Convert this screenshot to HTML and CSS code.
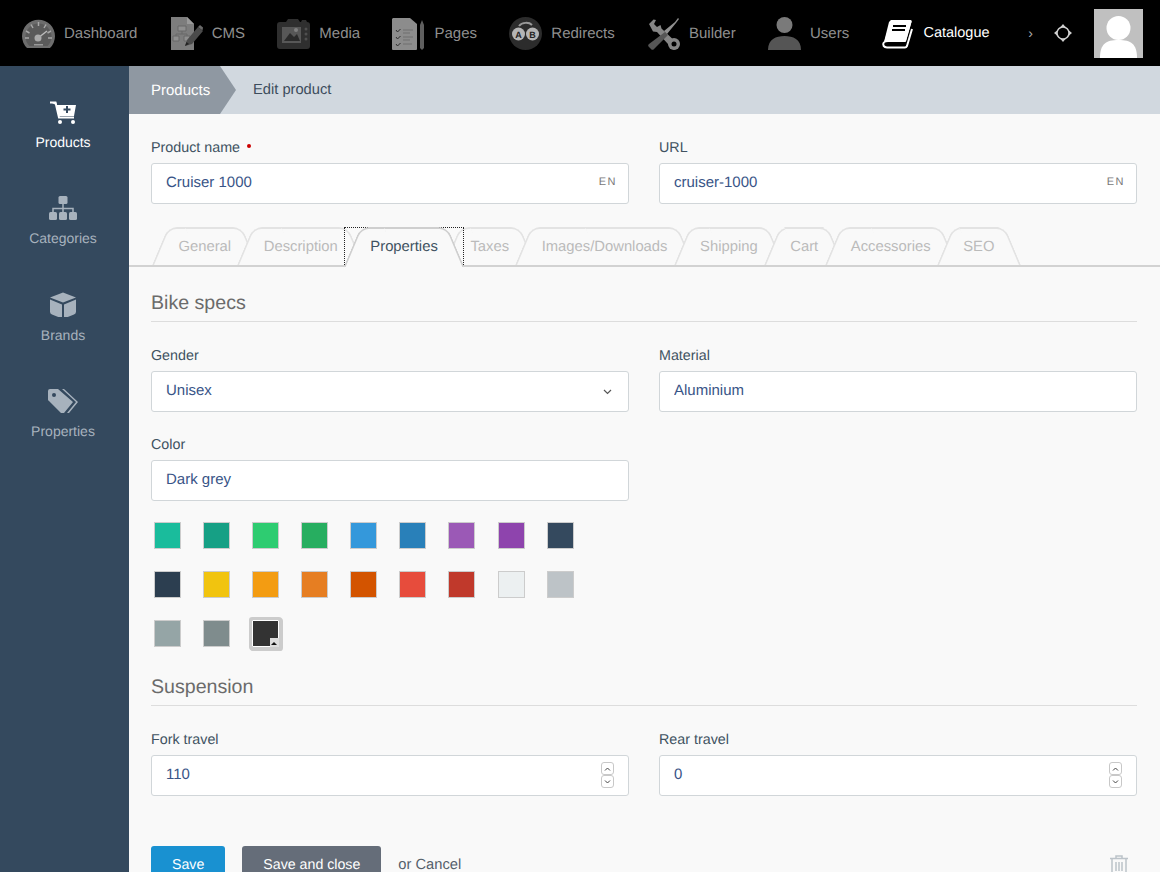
FILE: index.html
```html
<!DOCTYPE html>
<html lang="en">
<head>
<meta charset="utf-8">
<title>Edit product</title>
<link rel="stylesheet" href="styles.css">
</head>
<body>
<header class="topbar">
  <nav class="topnav">
    <a class="nav-item"><svg class="nav-icon" width="33" height="33" viewBox="0 0 33 33"><path d="M5 31A16.5 16.5 0 1 1 28 31Z" fill="#6d6d6d"/><path d="M7.5 29A13 13 0 1 1 25.500 29Z" fill="#5a5a5a"/><path d="M16.500 5v4M9 7.500l2 3.500M24 7.500l-2 3.500M4 14l3.500 2M29 14l-3.500 2M3 21h4M30 21h-4" stroke="#a8a8a8" stroke-width="1.500"/><path d="M16 21L25 14" stroke="#bbb" stroke-width="1.500"/><circle cx="16" cy="21" r="3.500" fill="#aaa"/><path d="M12 27h9v1.500h-9z" fill="#999"/></svg><span>Dashboard</span></a>
    <a class="nav-item"><svg class="nav-icon" width="33" height="33" viewBox="0 0 33 33"><path d="M1 0h16l7 7v26H1z" fill="#7d7d7d"/><path d="M17 0l7 7h-7z" fill="#9a9a9a"/><path d="M8 9h8v5H8zM3 19h6v5H3zM14 19h6v5h-6z" fill="#8f8f8f" stroke="#696969"/><path d="M12 14v3M6 19v-2h11v2" stroke="#696969" fill="none"/><path d="M15 29l2-6 11-13 5 4-11 13z" fill="#4b4b4b"/><path d="M28 10l2-2 3 2.500-.5 3z" fill="#6a6a6a"/><path d="M15 29l1.500-4 2.500 2z" fill="#222"/></svg><span>CMS</span></a>
    <a class="nav-item"><svg class="nav-icon" width="33" height="33" viewBox="0 0 33 33"><path d="M3 5h6l2-3h10l2 3h1l1-2h4l1 2a3 3 0 0 1 3 3v21a3 3 0 0 1-3 3H3a3 3 0 0 1-3-3V8a3 3 0 0 1 3-3z" fill="#2f2f2f"/><path d="M5 10h19v16H5z" fill="#575757"/><path d="M7 24l6-8 4 4 3-3 3 7z" fill="#2a2a2a"/><circle cx="19" cy="13" r="2" fill="#808080"/><circle cx="29" cy="12" r="1.500" fill="#4f4f4f"/><circle cx="29" cy="17" r="1.500" fill="#4f4f4f"/><circle cx="29" cy="22" r="1.500" fill="#4f4f4f"/></svg><span>Media</span></a>
    <a class="nav-item"><svg class="nav-icon" width="33" height="33" viewBox="0 0 33 33"><path d="M1 1h17l7 6v25a1 1 0 0 1-1 1H1a1 1 0 0 1-1-1V2z" fill="#8c8c8c"/><path d="M4 13l1.500 2 3-3M4 20l1.500 2 3-3M4 27l1.500 2 3-3" stroke="#2e2e2e" stroke-width="1" fill="none"/><path d="M11 13h10M11 16h7M11 20h10M11 23h7M11 27h9" stroke="#6f6f6f"/><path d="M28 8l2-5 2 5v23l-2 2-2-2z" fill="#5f5f5f"/></svg><span>Pages</span></a>
    <a class="nav-item"><svg class="nav-icon" width="33" height="33" viewBox="0 0 33 33"><circle cx="16.500" cy="16.500" r="16.500" fill="#2c2c2c"/><circle cx="9.500" cy="17" r="6.500" fill="#b5b5b5"/><circle cx="23.500" cy="17" r="6.500" fill="#b5b5b5"/><path d="M10 9C13 5 20 5 23 8" stroke="#999" stroke-width="2" fill="none"/><text class="ab" x="9.500" y="20.500">A</text><text class="ab" x="23.500" y="20.500">B</text></svg><span>Redirects</span></a>
    <a class="nav-item"><svg class="nav-icon" width="33" height="33" viewBox="0 0 33 33"><path d="M2 7L6.500 2.500 9 3 7 7l3 3 3.500-2 1 3.500L32 28a5 5 0 0 1-6 4.500L10 15 6 14.500z" fill="#858585"/><circle cx="27" cy="27" r="6" fill="#858585"/><circle cx="27" cy="27" r="2.500" fill="#000"/><path d="M17 14L28 5l3-4 1 1-3 4-9 11z" fill="#909090"/><path d="M18 15l3 3-14 14a2 2 0 0 1-3 0l-2-2a2 2 0 0 1 0-3z" fill="#565656"/></svg><span>Builder</span></a>
    <a class="nav-item"><svg class="nav-icon" width="33" height="33" viewBox="0 0 33 33"><circle cx="16.500" cy="8" r="8" fill="#7a7a7a"/><path d="M0 33c0-11 8-14 16.500-14S33 22 33 33z" fill="#555"/></svg><span>Users</span></a>
    <a class="nav-item active"><svg class="nav-icon" width="33" height="33" viewBox="0 0 33 33"><path d="M10 3h19a1.500 1.500 0 0 1 1.500 2L25 24a1.500 1.500 0 0 1-1.500 1H7c-3 0-4.500 1-4.500 2" fill="#fff"/><path d="M10 3h19a1.500 1.500 0 0 1 1.500 2L25 24a1.500 1.500 0 0 1-1.500 1H3L8 5z" fill="#fff"/><path d="M3 25c-2 3 0 5.500 3 5.500h18c1 0 1.500-.5 2-1.500l5-17" fill="none" stroke="#fff" stroke-width="2"/><path d="M12 9h13M11 13h13" stroke="#000" stroke-width="2"/></svg><span>Catalogue</span></a>
  </nav>
  <span class="nav-more">›</span>
  <svg class="nav-move" width="18" height="18" viewBox="0 0 18 18"><circle cx="9" cy="9" r="6" fill="none" stroke="#d0d0d0" stroke-width="1.500"/><path d="M9 0l2.500 3h-5zM9 18l2.500-3h-5zM0 9l3-2.500v5zM18 9l-3-2.500v5z" fill="#d0d0d0"/></svg>
  <div class="avatar"><svg width="49" height="49" viewBox="0 0 49 49"><circle cx="24.500" cy="19" r="12" fill="#fff"/><path d="M6 49c0-14 6-18 18.500-18S43 35 43 49z" fill="#fff"/></svg></div>
</header>

<div class="shell">
  <aside class="sidebar">
    <a class="side-item active"><svg width="30" height="26" viewBox="0 0 30 26"><path d="M2 4h6l1 3h19l-2 11H11L8 7" fill="#fff"/><path d="M2 4.500h5.500L11 19.500h15" fill="none" stroke="#fff" stroke-width="2"/><path d="M19 8v7M15.500 11.500h7" stroke="#34495e" stroke-width="2"/><circle cx="12" cy="24" r="2" fill="#fff"/><circle cx="25" cy="24" r="2" fill="#fff"/></svg><span>Products</span></a>
    <a class="side-item"><svg width="30" height="26" viewBox="0 -1 30 26"><rect x="10.500" y="1" width="9" height="8" rx="1.500"/><rect x="1" y="17" width="8" height="8" rx="1.500"/><rect x="11" y="17" width="8" height="8" rx="1.500"/><rect x="21" y="17" width="8" height="8" rx="1.500"/><path d="M15 9v8M5 17v-3.500h20V17" fill="none" stroke="#a7b2bd" stroke-width="1.500"/></svg><span>Categories</span></a>
    <a class="side-item"><svg width="30" height="26" viewBox="0 -1.500 30 26"><path d="M15 0l13 5-13 5L2 5z"/><path d="M2 7l12 5v14L4 22a3 3 0 0 1-2-3zM28 7L16 12v14l10-4a3 3 0 0 0 2-3z"/></svg><span>Brands</span></a>
    <a class="side-item"><svg width="30" height="26" viewBox="0 -2 30 26"><path d="M0 2a2 2 0 0 1 2-2h8l15 13-9 11a2 2 0 0 1-3 0L1 12a2 2 0 0 1-1-2z"/><circle cx="6" cy="6" r="2" fill="#34495e"/><path d="M14 0h2l14 13-9 11h-2l9-11z"/></svg><span>Properties</span></a>
  </aside>

  <main class="main">
    <div class="crumbs">
      <a class="crumb-first">Products</a>
      <span class="crumb-current">Edit product</span>
    </div>

    <div class="pad two-col top-fields">
      <div class="field">
        <label class="label required">Product name</label>
        <div class="control"><input class="input" value="Cruiser 1000"><span class="lang">EN</span></div>
      </div>
      <div class="field">
        <label class="label">URL</label>
        <div class="control"><input class="input" value="cruiser-1000"><span class="lang">EN</span></div>
      </div>
    </div>

    <div class="tabs">
      <a class="tab">General</a>
      <a class="tab">Description</a>
      <a class="tab tab-active"><i class="focus-ring"></i><b class="tab-text">Properties</b></a>
      <a class="tab">Taxes</a>
      <a class="tab">Images/Downloads</a>
      <a class="tab">Shipping</a>
      <a class="tab">Cart</a>
      <a class="tab">Accessories</a>
      <a class="tab">SEO</a>
    </div>

    <div class="pad pane">
      <h3 class="section">Bike specs</h3>
      <div class="two-col section-fields">
        <div class="field">
          <label class="label">Gender</label>
          <div class="control"><div class="input select">Unisex</div><svg class="chev" width="9" height="6" viewBox="0 0 9 6"><path d="M1 1l3.500 3.500L8 1" fill="none" stroke="#555" stroke-width="1.200"/></svg></div>
        </div>
        <div class="field">
          <label class="label">Material</label>
          <div class="control"><input class="input" value="Aluminium"></div>
        </div>
      </div>
      <div class="two-col color-row">
        <div class="field">
          <label class="label">Color</label>
          <div class="control"><input class="input" value="Dark grey"></div>
          <div class="swatches">
            <i class="swatch c1"></i><i class="swatch c2"></i><i class="swatch c3"></i><i class="swatch c4"></i><i class="swatch c5"></i><i class="swatch c6"></i><i class="swatch c7"></i><i class="swatch c8"></i><i class="swatch c9"></i>
            <i class="swatch c10"></i><i class="swatch c11"></i><i class="swatch c12"></i><i class="swatch c13"></i><i class="swatch c14"></i><i class="swatch c15"></i><i class="swatch c16"></i><i class="swatch c17"></i><i class="swatch c18"></i>
            <i class="swatch c19"></i><i class="swatch c20"></i><i class="swatch c21 selected"></i>
          </div>
        </div>
      </div>
      <h3 class="section section-second">Suspension</h3>
      <div class="two-col section-fields">
        <div class="field">
          <label class="label">Fork travel</label>
          <div class="control"><input class="input" value="110"><span class="spin"><i class="spin-btn"><svg width="7" height="4" viewBox="0 0 7 4"><path d="M1 3.500l2.500-2.500L6 3.500" fill="none" stroke="#444"/></svg></i><i class="spin-btn"><svg width="7" height="4" viewBox="0 0 7 4"><path d="M1 .5l2.500 2.500L6 .5" fill="none" stroke="#444"/></svg></i></span></div>
        </div>
        <div class="field">
          <label class="label">Rear travel</label>
          <div class="control"><input class="input" value="0"><span class="spin"><i class="spin-btn"><svg width="7" height="4" viewBox="0 0 7 4"><path d="M1 3.500l2.500-2.500L6 3.500" fill="none" stroke="#444"/></svg></i><i class="spin-btn"><svg width="7" height="4" viewBox="0 0 7 4"><path d="M1 .5l2.500 2.500L6 .5" fill="none" stroke="#444"/></svg></i></span></div>
        </div>
      </div>
      <div class="actions">
        <a class="btn btn-primary">Save</a>
        <a class="btn btn-dark">Save and close</a>
        <span class="cancel">or Cancel</span>
        <svg class="trash" width="18" height="20" viewBox="0 0 18 20"><path d="M0 3.500h18M6 3V1h6v2" fill="none" stroke="#bcc3c9" stroke-width="1.500"/><path d="M2 4v15h14V4" fill="none" stroke="#bcc3c9" stroke-width="1.500"/><path d="M6 7v9M9 7v9M12 7v9" stroke="#bcc3c9" stroke-width="1.500"/></svg>
      </div>
    </div>
  </main>
</div>
</body>
</html>
```

FILE: styles.css
```css
* { box-sizing: border-box; }
html, body { margin: 0; height: 872px; overflow: hidden; }
body { font-family: "Liberation Sans", Arial, sans-serif; font-size: 14px; color: #405261; background: #f9f9f9; text-rendering: geometricPrecision; }

.topbar { display: flex; align-items: center; height: 66px; background: #000; padding-left: 22px; }
.topnav { display: flex; gap: 32.300px; flex: 1; }
.nav-item { display: flex; align-items: center; gap: 9px; color: #8f8f8f; font-size: 15px; }
.nav-item.active { color: #fff; font-size: 14.500px; }
.nav-icon { display: block; }
.ab { font: bold 9px "Liberation Sans", sans-serif; text-anchor: middle; fill: #222; }
.nav-more { color: #aaa; font-size: 14px; margin-right: 21px; }
.nav-move { margin-right: 22px; }
.avatar { width: 49px; height: 49px; background: #c0c0c0; margin-right: 17px; overflow: hidden; }
.avatar svg { display: block; }

.shell { display: flex; height: 806px; }
.sidebar { width: 129px; flex: none; background: #34495e; padding: 32px 3px 0 0; display: flex; flex-direction: column; }
.side-item { height: 96.300px; flex: none; display: flex; flex-direction: column; align-items: center; gap: 10px; color: #a7b2bd; fill: #a7b2bd; }
.side-item.active { color: #fff; }
.side-item svg { display: block; }

.main { flex: 1; min-width: 0; }
.crumbs { display: flex; align-items: center; height: 48px; background: #d1d8df; }
.crumb-first { align-self: stretch; display: flex; align-items: center; width: 107px; padding-left: 22px; background: #8f98a2; color: #fff; font-size: 15px; clip-path: polygon(0 0, 91px 0, 107px 50%, 91px 100%, 0 100%); }
.crumb-current { margin-left: 17px; color: #3c4c5c; font-size: 14.700px; }

.pad { padding: 0 23px 0 22px; }
.two-col { display: grid; grid-template-columns: 478px 478px; column-gap: 30px; }
.top-fields { padding-top: 25px; }
.label { display: block; height: 17px; line-height: 18px; margin-bottom: 7px; font-size: 14.300px; }
.required::after { content: ""; display: inline-block; width: 4px; height: 4px; border-radius: 50%; background: #c00; margin-left: 7px; vertical-align: 4px; }
.control { position: relative; }
.input { display: block; width: 100%; height: 41px; padding: 0 14px 2px; border: 1px solid #d1d6d9; border-radius: 3px; background: #fff; font: 15px/37px "Liberation Sans", Arial, sans-serif; color: #385487; outline: none; text-rendering: geometricPrecision; }
.lang { position: absolute; right: 12px; top: 13px; font-size: 11px; line-height: 13px; letter-spacing: 1.500px; color: #777; }
.chev { position: absolute; right: 17px; top: 18px; }

.tabs { position: relative; z-index: 0; display: flex; height: 40px; margin-top: 23px; padding-left: 33.200px; border-bottom: 2px solid #d2d2d2; }
.tab { position: relative; display: block; height: 38px; padding: 0 16.300px; line-height: 41px; font-size: 14.800px; color: #bbb; white-space: nowrap; }
.tab::before, .tab::after { content: ""; position: absolute; top: 0; bottom: 0; width: calc(50% + 12px); background: #f9f9f9; border-top: 2px solid #e3e3e3; z-index: -1; }
.tab::before { left: -2px; border-left: 2px solid #e3e3e3; border-top-left-radius: 9px; transform: skewX(-22.800deg); }
.tab::after { right: -2px; border-right: 2px solid #e3e3e3; border-top-right-radius: 9px; transform: skewX(22.800deg); }
.tab:nth-child(1) { z-index: 1; } .tab:nth-child(2) { z-index: 2; } .tab:nth-child(4) { z-index: 4; } .tab:nth-child(5) { z-index: 5; }
.tab:nth-child(6) { z-index: 6; } .tab:nth-child(7) { z-index: 7; } .tab:nth-child(8) { z-index: 8; } .tab:nth-child(9) { z-index: 9; }
.tab-active { z-index: 20; color: #405261; height: 40px; }
.tab-active::before, .tab-active::after { border-color: #cfcfcf; z-index: 1; }
.tab-text { position: relative; z-index: 2; font-weight: normal; }
.focus-ring { position: absolute; left: -10px; right: -10px; top: 0; bottom: 2px; outline: 1px dotted #222; outline-offset: -1px; z-index: 0; }

.section { margin: 0; height: 31px; line-height: 25px; border-bottom: 1px solid #ddd; font-size: 19.600px; font-weight: normal; color: #6b6b6b; }
.pane { padding-top: 24px; }
.section-fields { margin-top: 25px; }
.color-row { margin-top: 24px; }
.swatches { display: grid; grid-template-columns: repeat(9, 27px); grid-auto-rows: 27px; column-gap: 22.090px; row-gap: 22px; margin: 21px 0 0 3px; }
.swatch { display: block; border: 1px solid #ccc; }
.swatch.selected { position: relative; border-color: #fff; box-shadow: 0 0 0 3px #ccc, 1px 1px 0 3px #ccc; border-radius: 1px; }
.swatch.selected::after { content: ""; position: absolute; right: -1px; bottom: -1px; width: 9px; height: 9px; background: #ddd; }
.swatch.selected::before { content: ""; position: absolute; right: 1px; bottom: 1px; border: 3px solid transparent; border-top: 0; border-bottom: 3px solid #111; z-index: 1; }
.section-second { margin-top: 28px; }
.spin { position: absolute; right: 15px; top: 7px; display: flex; flex-direction: column; }
.spin-btn { display: flex; align-items: center; justify-content: center; width: 13px; height: 13px; border: 1px solid #c8c8c8; border-radius: 3px; background: #fff; }
.actions { display: flex; align-items: flex-start; margin-top: 50px; }
.btn { display: block; height: 37px; padding: 11px 21px 0; line-height: 17px; font-size: 14.200px; border-radius: 3px; color: #fff; }
.btn-primary { background: #1991d1; margin-right: 17px; }
.btn-dark { background: #656d79; margin-right: 17px; }
.cancel { margin-top: 11px; line-height: 17px; font-size: 14.700px; color: #555f6b; }
.trash { margin-left: auto; margin-right: 9px; margin-top: 9px; }

.c1 { background: #1abc9c; } .c2 { background: #16a085; } .c3 { background: #2ecc71; } .c4 { background: #27ae60; }
.c5 { background: #3498db; } .c6 { background: #2980b9; } .c7 { background: #9b59b6; } .c8 { background: #8e44ad; }
.c9 { background: #34495e; } .c10 { background: #2c3e50; } .c11 { background: #f1c40f; } .c12 { background: #f39c12; }
.c13 { background: #e67e22; } .c14 { background: #d35400; } .c15 { background: #e74c3c; } .c16 { background: #c0392b; }
.c17 { background: #ecf0f1; } .c18 { background: #bdc3c7; } .c19 { background: #95a5a6; } .c20 { background: #7f8c8d; } .c21 { background: #333; }
```
